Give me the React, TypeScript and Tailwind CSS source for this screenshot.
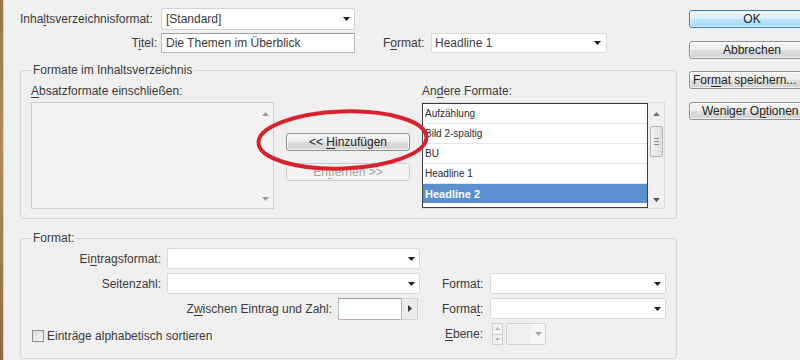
import React from "react";

const Tri = ({ color = "#1e1e1e", dir = "down" }: { color?: string; dir?: "down" | "up" | "right" }) => {
  if (dir === "up")
    return (
      <svg width="7" height="4" viewBox="0 0 7 4">
        <path d="M0 4H7L3.5 0Z" fill={color} />
      </svg>
    );
  if (dir === "right")
    return (
      <svg width="4" height="7" viewBox="0 0 4 7">
        <path d="M0 0V7L4 3.5Z" fill={color} />
      </svg>
    );
  return (
    <svg width="7" height="4" viewBox="0 0 7 4">
      <path d="M0 0H7L3.5 4Z" fill={color} />
    </svg>
  );
};

const U = ({ children }: { children: React.ReactNode }) => <span className="underline underline-offset-[2px]">{children}</span>;

const btn =
  "flex items-center justify-center h-[18px] rounded-[3px] border border-[#8e8f8f] bg-[linear-gradient(to_bottom,#f4f4f4_0%,#ececec_50%,#dedede_51%,#d3d3d3_100%)] text-[#222] shadow-[inset_0_0_0_1px_rgba(255,255,255,0.7)] whitespace-nowrap";

const items = ["Aufzählung", "Bild 2-spaltig", "BU", "Headline 1", "Headline 2", ""];

export default function App() {
  return (
    <div className="relative flex w-[800px] h-[360px] overflow-hidden bg-[#f0f0f0] font-['Liberation_Sans',Arial,sans-serif] text-[12px] leading-[14px] text-[#3a3a3a]">
      {/* brown edge */}
      <div className="w-[3px] shrink-0 bg-[linear-gradient(to_bottom,#9a7349,#b48a5c_40%,#8f6a43)]" />
      <div className="w-[1px] shrink-0 bg-[#d9d2c8]" />

      {/* left column */}
      <div className="flex w-[685px] shrink-0 flex-col pl-[16px] pt-[8px]">
        {/* row 1 */}
        <div className="flex h-[22px] items-center">
          <div className="w-[141px]">
            Inha<U>l</U>tsverzeichnisformat:
          </div>
          <div className="flex h-[22px] w-[194px] items-center justify-between rounded-[2px] border border-[#d3d3d3] bg-white pl-[4px] pr-[4px]">
            <span>[Standard]</span>
            <Tri />
          </div>
        </div>
        {/* row 2 */}
        <div className="mt-[3px] flex h-[20px] items-center">
          <div className="w-[141px] pr-[4px] text-right">
            T<U>i</U>tel:
          </div>
          <div className="flex h-[20px] w-[194px] items-center border border-[#b9b9b9] border-t-[#a2a2a2] bg-white pl-[4px]">
            <span>Die Themen im Überblick</span>
          </div>
          <div className="ml-[28px] w-[48px]">
            F<U>o</U>rmat:
          </div>
          <div className="flex h-[20px] w-[176px] items-center justify-between rounded-[2px] border border-[#dadada] bg-white pl-[3px] pr-[5px]">
            <span>Headline 1</span>
            <Tri />
          </div>
        </div>

        {/* group 1 */}
        <div className="relative mt-[17px] h-[149px] w-[657px] rounded-[3px] border border-[#d5d5d5]">
          <span className="absolute left-[10px] top-[-8px] bg-[#f0f0f0] px-[2px] leading-[14px]">Formate im Inhaltsverzeichnis</span>
          <div className="grid grid-cols-[243px_124px_243px] gap-x-[12px] pl-[10px] pt-[13px]">
            {/* left list */}
            <div className="flex flex-col">
              <div className="mb-[4px] h-[14px]">
                <U>A</U>bsatzformate einschließen:
              </div>
              <div className="flex h-[107px] border border-[#d0d0d0] bg-[#f3f3f3]">
                <div className="flex-1" />
                <div className="flex w-[16px] flex-col items-center justify-between pb-[7px] pt-[9px]">
                  <Tri dir="up" color="#9a9a9a" />
                  <Tri color="#9a9a9a" />
                </div>
              </div>
            </div>
            {/* middle buttons */}
            <div className="flex flex-col gap-[12px] pt-[49px]">
              <div className={btn}>
                <span>
                  &lt;&lt; <U>H</U>inzufügen
                </span>
              </div>
              <div className="flex h-[18px] items-center justify-center rounded-[3px] border border-[#cdcdcd] bg-[#f4f4f4] text-[#a3a3a3]">
                <span>
                  En<U>t</U>fernen &gt;&gt;
                </span>
              </div>
            </div>
            {/* right list */}
            <div className="flex flex-col">
              <div className="mb-[4px] h-[14px]">
                An<U>d</U>ere Formate:
              </div>
              <div className="flex h-[107px] w-[243px] border border-[#dadada] border-l-0">
                <div className="flex w-[226px] flex-col overflow-hidden border border-[#3d3d3d] bg-white text-[10px] leading-[12px] text-[#2a2a2a]">
                  {items.map((it, i) => (
                    <div
                      key={i}
                      className={
                        i === 4
                          ? "flex h-[19px] shrink-0 items-center bg-[#5b8fd0] px-[2px] text-[11px] font-bold text-white"
                          : "flex h-[20px] shrink-0 items-center border-b border-[#e6e6e6] px-[2px]"
                      }
                    >
                      {it}
                    </div>
                  ))}
                </div>
                <div className="flex w-[16px] flex-col items-center pt-[9px]">
                  <Tri dir="up" color="#7a7a7a" />
                  <div className="mt-[10px] flex h-[31px] w-[13px] flex-col items-center justify-center gap-[2px] rounded-[2px] border border-[#b5b5b5] bg-[linear-gradient(to_right,#f4f4f4,#dedede)]">
                    <div className="h-px w-[5px] bg-[#8a8a8a]" />
                    <div className="h-px w-[5px] bg-[#8a8a8a]" />
                    <div className="h-px w-[5px] bg-[#8a8a8a]" />
                  </div>
                  <div className="flex-1" />
                  <div className="pb-[6px]">
                    <Tri color="#555" />
                  </div>
                </div>
              </div>
            </div>
          </div>
        </div>

        {/* group 2 */}
        <div className="relative mt-[19px] h-[121px] w-[657px] rounded-[3px] border border-[#d5d5d5]">
          <span className="absolute left-[10px] top-[-8px] bg-[#f0f0f0] px-[2px] leading-[14px]">Format:</span>
          <div className="flex flex-col gap-[4px] pl-[10px] pt-[9px]">
            {/* row a */}
            <div className="flex h-[21px] items-center">
              <div className="w-[130px] text-right">
                Ei<U>n</U>tragsformat:
              </div>
              <div className="ml-[6px] flex h-[21px] w-[253px] items-center justify-end rounded-[2px] border border-[#dadada] bg-white pr-[4px]">
                <Tri />
              </div>
            </div>
            {/* row b */}
            <div className="flex h-[21px] items-center">
              <div className="w-[130px] text-right">Seitenzahl:</div>
              <div className="ml-[6px] flex h-[21px] w-[253px] items-center justify-end rounded-[2px] border border-[#dadada] bg-white pr-[4px]">
                <Tri />
              </div>
              <div className="ml-[22px] w-[48px]">Format:</div>
              <div className="flex h-[21px] w-[176px] items-center justify-end rounded-[2px] border border-[#dadada] bg-white pr-[4px]">
                <Tri />
              </div>
            </div>
            {/* row c */}
            <div className="flex h-[21px] items-center">
              <div className="w-[301px] text-right">
                Z<U>w</U>ischen Eintrag und Zahl:
              </div>
              <div className="ml-[6px] h-[22px] w-[64px] border border-[#b5b5b5] border-t-[#9e9e9e] bg-white" />
              <div className="flex h-[22px] w-[16px] items-center justify-center border border-l-0 border-[#d3d3d3] bg-[#ececec]">
                <Tri dir="right" color="#333" />
              </div>
              <div className="ml-[24px] w-[48px]">
                Forma<U>t</U>:
              </div>
              <div className="flex h-[21px] w-[176px] items-center justify-end rounded-[2px] border border-[#dadada] bg-white pr-[4px]">
                <Tri />
              </div>
            </div>
            {/* row d */}
            <div className="flex h-[22px] items-center">
              <div className="flex w-[411px] items-center pt-[3px]">
                <div className="ml-[1px] h-[12px] w-[12px] border border-[#8f8f8f] bg-[linear-gradient(135deg,#dcdcdc,#f7f7f7)]" />
                <span className="ml-[3px]">
                  Einträ<U>g</U>e alphabetisch sortieren
                </span>
              </div>
              <div className="w-[44px] pr-[3px] text-right">
                <U>E</U>bene:
              </div>
              <div className="ml-[6px] flex h-[22px] w-[11px] flex-col">
                <div className="flex flex-1 items-center justify-center border border-[#cfcfcf] bg-[#f3f3f3]">
                  <svg width="5" height="3" viewBox="0 0 5 3">
                    <path d="M0 3H5L2.5 0Z" fill="#b5b5b5" />
                  </svg>
                </div>
                <div className="flex flex-1 items-center justify-center border border-t-0 border-[#cfcfcf] bg-[#f3f3f3]">
                  <svg width="5" height="3" viewBox="0 0 5 3">
                    <path d="M0 0H5L2.5 3Z" fill="#b5b5b5" />
                  </svg>
                </div>
              </div>
              <div className="ml-[3px] flex h-[22px] w-[40px] items-center rounded-[2px] border border-[#cfcfcf] bg-[#f7f7f7]">
                <div className="h-full w-[24px] bg-[#f1f1f1]" />
                <div className="flex flex-1 items-center justify-center">
                  <Tri color="#a8a8a8" />
                </div>
              </div>
            </div>
          </div>
        </div>
      </div>

      {/* right buttons */}
      <div className="flex w-[126px] shrink-0 flex-col gap-[12.5px] pt-[10px]">
        <div className="flex h-[18px] items-center justify-center rounded-[3px] border border-[#3c7fb1] bg-[linear-gradient(to_bottom,#eaf6fd_0%,#d9f0fc_50%,#bee6fd_51%,#a7d9f5_100%)] text-[#222] shadow-[inset_0_0_0_1px_rgba(255,255,255,0.6)]">
          <span>OK</span>
        </div>
        <div className={btn}>
          <span>Abbrechen</span>
        </div>
        <div className={btn + " justify-start pl-[3px]"}>
          <span>
            For<U>m</U>at speichern...
          </span>
        </div>
        <div className={btn + " justify-start pl-[12px]"}>
          <span>
            Weniger O<U>p</U>tionen
          </span>
        </div>
      </div>

      {/* red highlight ellipse */}
      <svg
        className="pointer-events-none absolute left-[255px] top-[108px]"
        width="175"
        height="64"
        viewBox="0 0 175 64"
      >
        <ellipse cx="87.5" cy="32" rx="84" ry="28.5" fill="none" stroke="#d8222c" strokeWidth="4" transform="rotate(-2 87.5 32)" />
      </svg>
    </div>
  );
}
